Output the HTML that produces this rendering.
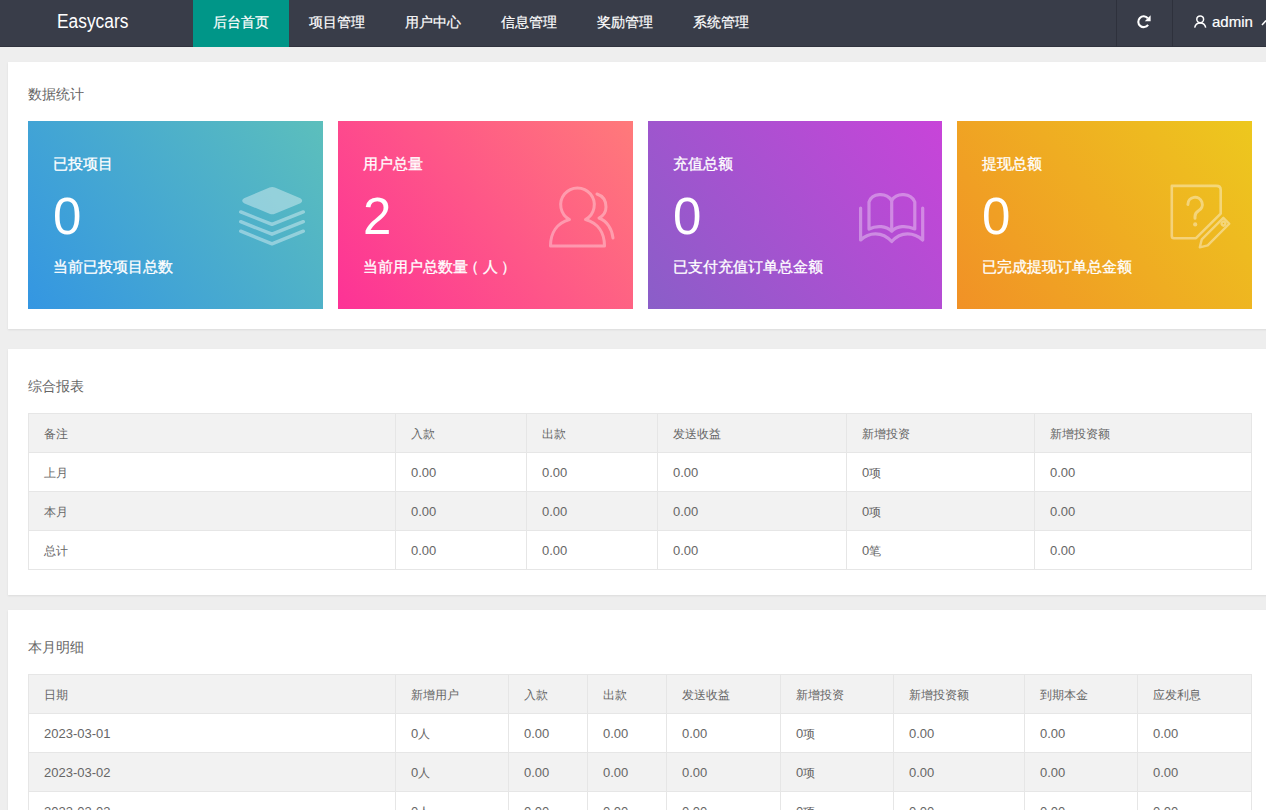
<!DOCTYPE html>
<html><head><meta charset="utf-8">
<style>
*{box-sizing:border-box;margin:0;padding:0}
html,body{width:1266px;height:810px;overflow:hidden}
body{background:#eeeeee;font-family:"Liberation Sans",sans-serif;position:relative;color:#666}
.hdr{position:absolute;left:0;top:0;width:1266px;height:47px;background:#393d49;border-bottom:1px solid #30333e}
.logo{position:absolute;left:56.5px;top:9.4px;color:#fff;font-size:19.5px;line-height:24px;white-space:nowrap;transform:scaleX(0.89);transform-origin:0 0}
.nav{position:absolute;top:0;height:47px;width:96px;color:#fff;-webkit-text-stroke:0.2px #fff;font-size:14px;line-height:44px;text-align:center;white-space:nowrap}
.nav.on{background:#009688}
.sep{position:absolute;top:0;width:1px;height:47px;background:#2e313c}
.admin{position:absolute;left:1212px;top:12px;color:#fff;-webkit-text-stroke:0.2px #fff;font-size:15px;line-height:20px;white-space:nowrap}
.box{position:absolute;left:8px;width:1270px;background:#fff;box-shadow:0 1px 2px 0 rgba(0,0,0,.08)}
.ttl{position:absolute;left:28px;font-size:14px;line-height:20px;color:#666;white-space:nowrap}
.card{position:absolute;top:121px;height:188px;color:#fff;-webkit-text-stroke:0.3px #fff}
.card .t{position:absolute;left:25px;top:33px;font-size:15px;line-height:20px;white-space:nowrap}
.card .n{-webkit-text-stroke:0;position:absolute;left:25px;top:68px;font-size:51px;line-height:56px;white-space:nowrap}
.card .d{position:absolute;left:25px;top:136px;font-size:15px;line-height:20px;white-space:nowrap}
.c1{left:28px;width:295px;background:linear-gradient(52deg,#3496e2,#5cbfbc)}
.c2{left:338px;width:295px;background:linear-gradient(52deg,#fd3296,#ff7a7a)}
.c3{left:648px;width:294px;background:linear-gradient(52deg,#8a5ec8,#c844d9)}
.c4{left:957px;width:295px;background:linear-gradient(52deg,#f19126,#edc81e)}
table{position:absolute;left:28px;border-collapse:collapse;table-layout:fixed;font-size:13px;color:#666}
td{border:1px solid #e6e6e6;height:39px;padding:1px 15px 0;line-height:20px;white-space:nowrap;overflow:hidden}
tr.h td,tr.e td{background:#f2f2f2}
.cj{font-size:12px}
</style></head><body>
<div class="hdr"></div>
<div class="logo">Easycars</div>
<div class="nav on" style="left:193px">后台首页</div>
<div class="nav" style="left:289px">项目管理</div>
<div class="nav" style="left:385px">用户中心</div>
<div class="nav" style="left:481px">信息管理</div>
<div class="nav" style="left:577px">奖励管理</div>
<div class="nav" style="left:673px">系统管理</div>
<div class="sep" style="left:1116px"></div>
<div class="sep" style="left:1172px"></div>
<div class="admin">admin</div>

<div class="box" style="top:62px;height:267px"></div>
<div class="ttl" style="top:84px">数据统计</div>
<div class="card c1"><div class="t">已投项目</div><div class="n">0</div><div class="d">当前已投项目总数</div></div>
<div class="card c2"><div class="t">用户总量</div><div class="n">2</div><div class="d">当前用户总数量<span style="position:relative;left:-4px">（</span>人<span style="position:relative;left:2.5px">）</span></div></div>
<div class="card c3"><div class="t">充值总额</div><div class="n">0</div><div class="d">已支付充值订单总金额</div></div>
<div class="card c4"><div class="t">提现总额</div><div class="n">0</div><div class="d">已完成提现订单总金额</div></div>

<div class="box" style="top:349px;height:246px"></div>
<div class="ttl" style="top:376px">综合报表</div>
<table style="top:413px;width:1223px">
<colgroup><col style="width:367px"><col style="width:131px"><col style="width:131px"><col style="width:189px"><col style="width:188px"><col style="width:217px"></colgroup>
<tr class="h"><td class="cj">备注</td><td class="cj">入款</td><td class="cj">出款</td><td class="cj">发送收益</td><td class="cj">新增投资</td><td class="cj">新增投资额</td></tr>
<tr><td class="cj">上月</td><td>0.00</td><td>0.00</td><td>0.00</td><td>0<span class="cj">项</span></td><td>0.00</td></tr>
<tr class="e"><td class="cj">本月</td><td>0.00</td><td>0.00</td><td>0.00</td><td>0<span class="cj">项</span></td><td>0.00</td></tr>
<tr><td class="cj">总计</td><td>0.00</td><td>0.00</td><td>0.00</td><td>0<span class="cj">笔</span></td><td>0.00</td></tr>
</table>

<div class="box" style="top:610px;height:260px"></div>
<div class="ttl" style="top:637px">本月明细</div>
<table style="top:674px;width:1223px">
<colgroup><col style="width:367px"><col style="width:113px"><col style="width:79px"><col style="width:79px"><col style="width:114px"><col style="width:113px"><col style="width:131px"><col style="width:113px"><col style="width:114px"></colgroup>
<tr class="h"><td class="cj">日期</td><td class="cj">新增用户</td><td class="cj">入款</td><td class="cj">出款</td><td class="cj">发送收益</td><td class="cj">新增投资</td><td class="cj">新增投资额</td><td class="cj">到期本金</td><td class="cj">应发利息</td></tr>
<tr><td>2023-03-01</td><td>0<span class="cj">人</span></td><td>0.00</td><td>0.00</td><td>0.00</td><td>0<span class="cj">项</span></td><td>0.00</td><td>0.00</td><td>0.00</td></tr>
<tr class="e"><td>2023-03-02</td><td>0<span class="cj">人</span></td><td>0.00</td><td>0.00</td><td>0.00</td><td>0<span class="cj">项</span></td><td>0.00</td><td>0.00</td><td>0.00</td></tr>
<tr><td>2023-03-03</td><td>0<span class="cj">人</span></td><td>0.00</td><td>0.00</td><td>0.00</td><td>0<span class="cj">项</span></td><td>0.00</td><td>0.00</td><td>0.00</td></tr>
</table>
<svg style="position:absolute;left:0;top:0" width="1266" height="810" viewBox="0 0 1266 810">
<g fill="none" stroke="#fff" stroke-width="2.1">
<path d="M1147.8 18.2 A5.4 5.4 0 1 0 1148.1 24.8"/>
</g>
<path d="M1150.6 15.2 L1150.6 21.2 L1144.8 21.2 Z" fill="#fff"/>
<g fill="none" stroke="#fff" stroke-width="1.5">
<circle cx="1200.2" cy="19.3" r="3.4"/>
<path d="M1194.7 27.6 A5.6 5.6 0 0 1 1205.7 27.6"/>
<path d="M1262 25 L1266 20.5"/>
</g>
<g opacity="0.38">
<path fill="#fff" d="M244 198.2 L269.5 187.6 Q272.2 186.5 274.9 187.6 L300.4 198.2 Q304 200.7 300.4 203.2 L274.9 213.8 Q272.2 214.9 269.5 213.8 L244 203.2 Q240.4 200.7 244 198.2 Z"/>
<g fill="none" stroke="#fff" stroke-width="3.4" stroke-linecap="round" stroke-linejoin="round">
<path d="M240.7 211.9 L272 224.4 L303.3 211.9"/>
<path d="M240.7 221.7 L272 234.2 L303.3 221.7"/>
<path d="M240.7 231.2 L272 243.9 L303.3 231.2"/>
</g></g>
<g opacity="0.35" fill="none" stroke="#fff" stroke-width="3" stroke-linecap="round" stroke-linejoin="round">
<path d="M569.5 219.5 A16.8 16.8 0 1 1 585.5 219.5 C598 223 604.5 233 604.5 246 L550.5 246 C550.5 233 557 223 569.5 219.5 Z"/>
<path d="M597 194 C603 196 606 201 606 207 C606 212 603 216 599 218 C607 221 612 229 613 238"/>
</g>
<g opacity="0.35" fill="none" stroke="#fff" stroke-width="3.2" stroke-linecap="round" stroke-linejoin="round">
<path d="M860.6 208 L860.6 240 C869 232 882 231 891.7 241.5 C901 231 914 232 922.7 240 L922.7 208"/>
<path d="M869 229 L869 202 C872 193 886 192 891.7 200.5 C897 192 911 193 914.8 202 L914.8 229 C906 225 897 226 891.7 231 C886 226 877 225 869 229 Z"/>
<path d="M891.7 200.5 L891.7 231"/>
</g>
<g opacity="0.4">
<g fill="none" stroke="#fff" stroke-width="2.6" stroke-linecap="round" stroke-linejoin="round">
<path d="M1196 238.2 L1174 238.2 Q1171.8 238.2 1171.8 236 L1171.8 185.9 L1216.5 185.9 Q1220.7 185.9 1220.7 190 L1220.7 213.6 Z"/>
<path stroke-width="3" d="M1187.9 204.5 A7.2 7.2 0 1 1 1198.5 210.8 Q1195 213 1195 216.5 L1195 218.3"/>
</g>
<circle cx="1195.2" cy="224.4" r="2.1" fill="#fff"/>
<g transform="translate(1199.8 247.3) rotate(-45)" fill="none" stroke="#fff" stroke-width="2.4" stroke-linejoin="round">
<path d="M0 0 L7 -4.2 L37.5 -4.2 L37.5 4.2 L7 4.2 Z"/>
<circle cx="33.5" cy="0" r="1.9"/>
</g></g>
</svg>
</body></html>
